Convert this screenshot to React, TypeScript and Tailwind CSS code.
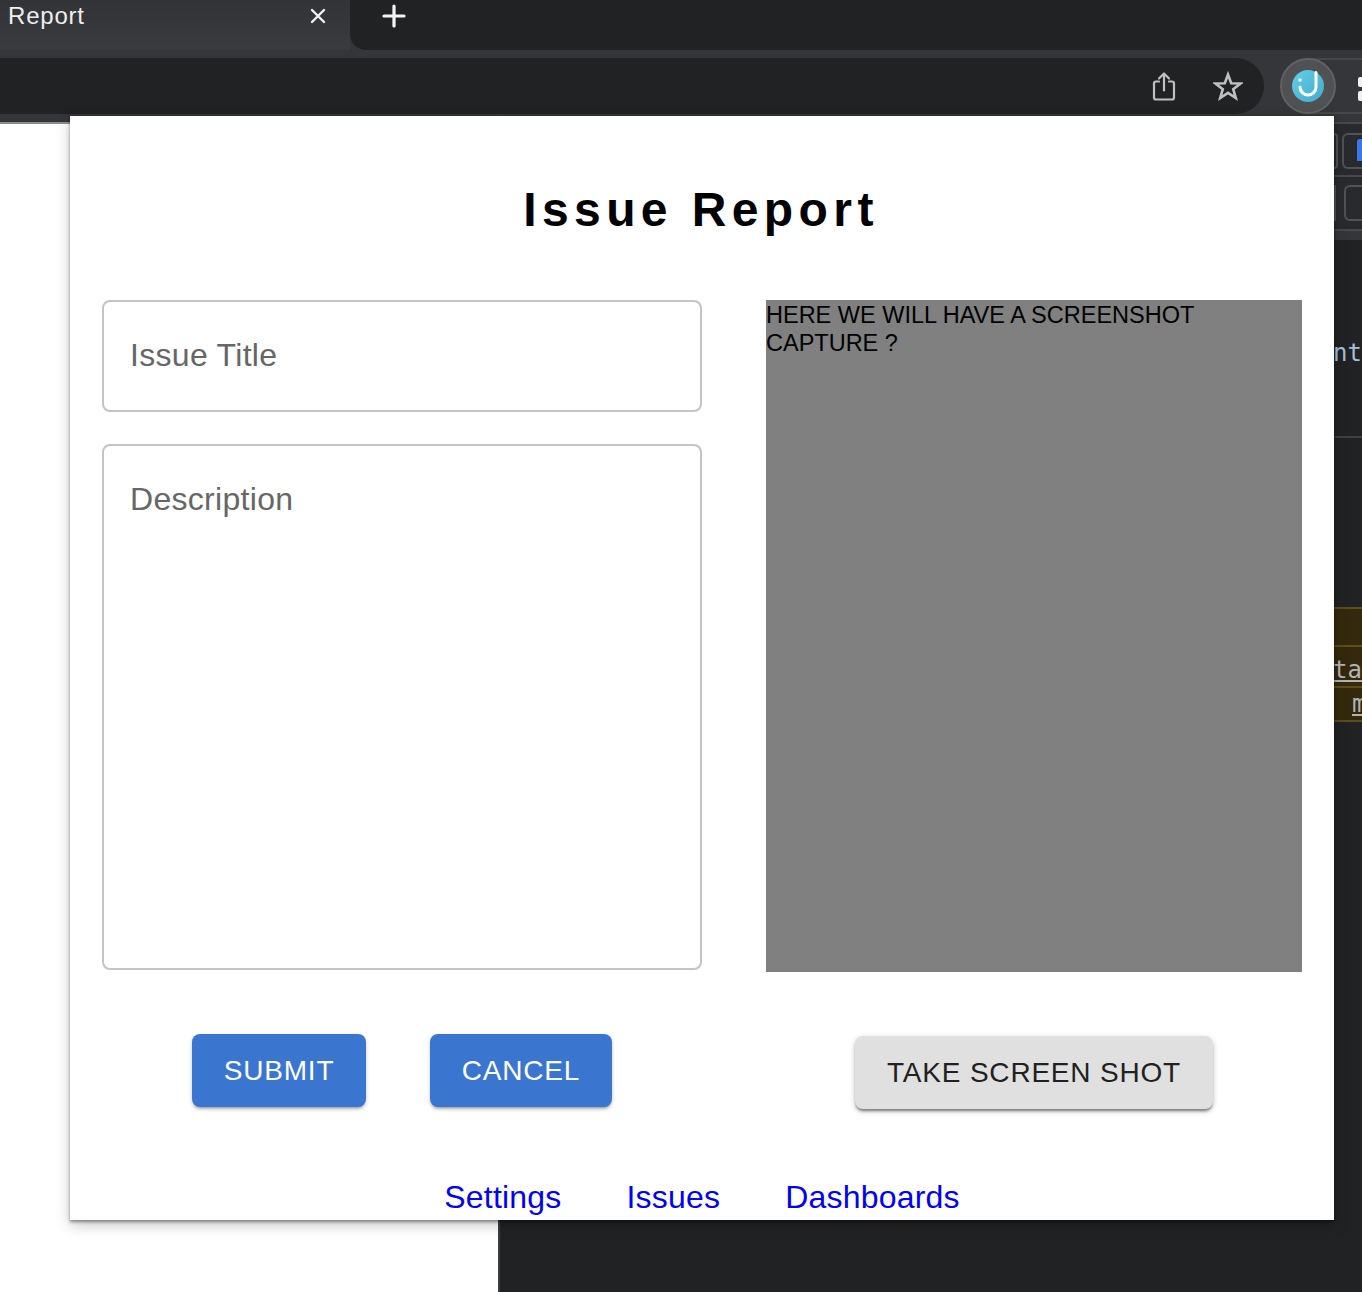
import React from "react";

const font = "font-['Liberation_Sans',Arial,sans-serif]";

function ShareIcon() {
  return (
    <svg width="24" height="30" viewBox="0 0 24 30" fill="none" stroke="#c0c0c1" strokeWidth="2.2" strokeLinecap="round" strokeLinejoin="round">
      <path d="M7 10.500H4a2 2 0 0 0-2 2v14a2 2 0 0 0 2 2h16a2 2 0 0 0 2-2v-14a2 2 0 0 0-2-2h-3" />
      <path d="M12 19.500V2.500M7 7.500l5-5 5 5" />
    </svg>
  );
}

function StarIcon() {
  return (
    <svg width="30" height="30" viewBox="0 0 30 30" fill="none" stroke="#c0c0c1" strokeWidth="2.600" strokeLinejoin="miter">
      <path d="M15 3.500 18.200 12.200 27.500 12.500 20.200 18.200 22.800 27 15 21.900 7.200 27 9.800 18.200 2.500 12.500 11.800 12.200Z" />
    </svg>
  );
}

function Logo() {
  return (
    <div className="flex h-[56px] w-[56px] shrink-0 items-center justify-center rounded-full border-2 border-[#606164] bg-[#505153]">
      <svg width="32" height="32" viewBox="0 0 32 32">
        <defs>
          <linearGradient id="lg" x1="0" y1="0" x2="1" y2="1">
            <stop offset="0" stopColor="#62d0e6" />
            <stop offset="1" stopColor="#44a9c9" />
          </linearGradient>
        </defs>
        <circle cx="16" cy="16" r="16" fill="url(#lg)" />
        <circle cx="8" cy="10" r="1.800" fill="#fff" />
        <path d="M24 2.500V17a8 8 0 0 1-16 0" fill="none" stroke="#fff" strokeWidth="3" strokeLinecap="round" />
      </svg>
    </div>
  );
}

function Chrome() {
  return (
    <div className={`h-[115px] shrink-0 ${font}`}>
      <div className="flex h-[50px] bg-[#35363a]">
        <div className="flex w-[350px] shrink-0 items-start justify-between bg-gradient-to-b from-[#323337] to-[#3a3b3f] pl-[8px] pr-[22px]">
          <span className="text-[24px] leading-[32px] tracking-[0.8px] text-[#eeeeef]">Report</span>
          <svg className="mt-[6px]" width="20" height="20" viewBox="0 0 20 20" stroke="#f1f1f2" strokeWidth="2.400" strokeLinecap="round">
            <path d="M4 4l12 12M16 4 4 16" />
          </svg>
        </div>
        <div className="flex flex-1 items-start rounded-bl-[16px] bg-[#212224] pl-[31px] pt-[3px]">
          <svg width="26" height="26" viewBox="0 0 26 26" stroke="#f5f5f5" strokeWidth="3.200" strokeLinecap="round">
            <path d="M13 3v20M3 13h20" />
          </svg>
        </div>
      </div>
      <div className="flex h-[65px] items-start gap-[16px] bg-[#35363a] pt-[8px]">
        <div className="flex h-[56px] w-[1264px] shrink-0 items-center justify-end gap-[37px] rounded-r-full bg-[#212224] pr-[21px]">
          <ShareIcon />
          <StarIcon />
        </div>
        <div className="flex h-[56px] flex-1 items-center rounded-l-full border-y-2 border-[#46474a]">
          <Logo />
          <div className="ml-[22px] mt-[5px] flex flex-col gap-[4px]">
            <div className="h-[10px] w-[8px] rounded-[2px] bg-[#f1f1f1]" />
            <div className="h-[10px] w-[8px] rounded-[2px] bg-[#f1f1f1]" />
          </div>
        </div>
      </div>
    </div>
  );
}

function DevtoolsStub() {
  return (
    <div className="flex h-full flex-col border-l-2 border-[#3c3d40] bg-[#212224] font-['DejaVu_Sans_Mono',monospace] text-[24px]">
      <div className="h-[9px] shrink-0 border-b-2 border-[#47484b] bg-[#35363a]" />
      <div className="flex h-[53px] shrink-0 items-start justify-end gap-[4px] border-b-2 border-[#47484b] bg-[#292a2d] pt-[9px]">
        <div className="h-[36px] w-[8px] rounded-[4px] border-2 border-[#515256]" />
        <div className="h-[36px] w-[20px] rounded-l-[6px] border-2 border-r-0 border-[#515256] pl-[13px] pt-[4px]">
          <svg width="5" height="24" viewBox="0 0 5 24">
            <path d="M2 0h3v22H0V3a3 3 0 0 1 2-3Z" fill="#3b78e7" />
          </svg>
        </div>
      </div>
      <div className="flex h-[54px] shrink-0 items-start justify-end gap-[8px] border-b-2 border-[#47484b] bg-[#292a2d] pt-[8px]">
        <div className="h-[36px] w-[2px] bg-[#515256]" />
        <div className="h-[36px] w-[18px] rounded-l-[6px] border-2 border-r-0 border-[#515256]" />
      </div>
      <div className="h-[9px] shrink-0 bg-[#35363a]" />
      <div className="flex h-[198px] shrink-0 flex-col items-end border-b-2 border-[#3e3f42]">
        <span className="mt-[99px] leading-[28px] text-[#a3bfdc]">nt</span>
      </div>
      <div className="h-[169px] shrink-0" />
      <div className="flex h-[115px] shrink-0 flex-col border-y-2 border-[#5d4e16] bg-[#34290c] text-[#b3b3b3]">
        <div className="h-[38px] shrink-0 border-b-2 border-[#5d4e16]" />
        <div className="flex h-[38px] shrink-0 items-end justify-end">
          <span className="leading-[30px] underline">sta</span>
        </div>
        <div className="mt-[1px] flex flex-1 justify-end border-t-2 border-[#5d4e16]">
          <span className="w-[10px] whitespace-nowrap leading-[32px] underline">m</span>
        </div>
      </div>
    </div>
  );
}

function Modal() {
  const blue = "h-[73px] rounded-[8px] bg-[#3a75cf] text-[28px] tracking-[0.8px] text-white shadow-[0_3px_3px_-2px_rgba(0,0,0,0.3),0_2px_4px_rgba(0,0,0,0.2)]";
  return (
    <div className={`absolute left-[70px] top-[116px] flex h-[1104px] w-[1264px] flex-col overflow-hidden bg-white px-[32px] shadow-[0_2px_3px_rgba(0,0,0,0.4),0_5px_14px_rgba(0,0,0,0.22)] ${font}`}>
      <h1 className="mt-[66px] h-[56px] pr-[2px] text-center text-[48px] font-bold leading-[56px] tracking-[5.4px] text-black">
        Issue Report
      </h1>
      <div className="mt-[62px] flex justify-between">
        <div className="w-[600px]">
          <input
            placeholder="Issue Title"
            className="block h-[112px] w-full rounded-[8px] border-2 border-[#c4c4c4] px-[26px] pb-[2px] text-[32px] tracking-[0.3px] text-black outline-none placeholder:text-[#666666]"
          />
          <textarea
            placeholder="Description"
            className="mt-[32px] block h-[526px] w-full resize-none rounded-[8px] border-2 border-[#c4c4c4] px-[26px] py-[34px] text-[32px] leading-[38px] tracking-[0.3px] text-black outline-none placeholder:text-[#666666]"
          />
        </div>
        <div className="h-[672px] w-[536px] bg-[#808080] pt-px text-[23.5px] leading-[28px] text-black">
          HERE WE WILL HAVE A SCREENSHOT CAPTURE ?
        </div>
      </div>
      <div className="mt-[62px] flex items-start">
        <div className="flex w-[600px] justify-center gap-[64px]">
          <button className={`${blue} w-[174px]`}>SUBMIT</button>
          <button className={`${blue} w-[182px]`}>CANCEL</button>
        </div>
        <div className="ml-[64px] flex w-[536px] justify-center pt-[2px]">
          <button className="h-[73px] w-[358px] rounded-[8px] bg-[#e0e0e0] text-[28px] tracking-[0.8px] text-[#212121] shadow-[0_3px_3px_-1px_rgba(0,0,0,0.45),0_2px_6px_rgba(0,0,0,0.2)]">
            TAKE SCREEN SHOT
          </button>
        </div>
      </div>
      <nav className="mt-[66px] flex justify-center gap-[65px] text-[32px] leading-[44px] tracking-[0.2px] text-[#0000ee]">
        <a>Settings</a>
        <a>Issues</a>
        <a>Dashboards</a>
      </nav>
    </div>
  );
}

export default function App() {
  return (
    <div className="relative flex h-[1292px] w-[1362px] flex-col overflow-hidden bg-white">
      <Chrome />
      <div className="flex min-h-0 flex-1">
        <div className="w-[498px] shrink-0">
          <div className="h-[7px] bg-[#35363a]" />
          <div className="h-[2px] bg-[#8e8e8e]" />
        </div>
        <div className="flex-1">
          <DevtoolsStub />
        </div>
      </div>
      <Modal />
    </div>
  );
}
